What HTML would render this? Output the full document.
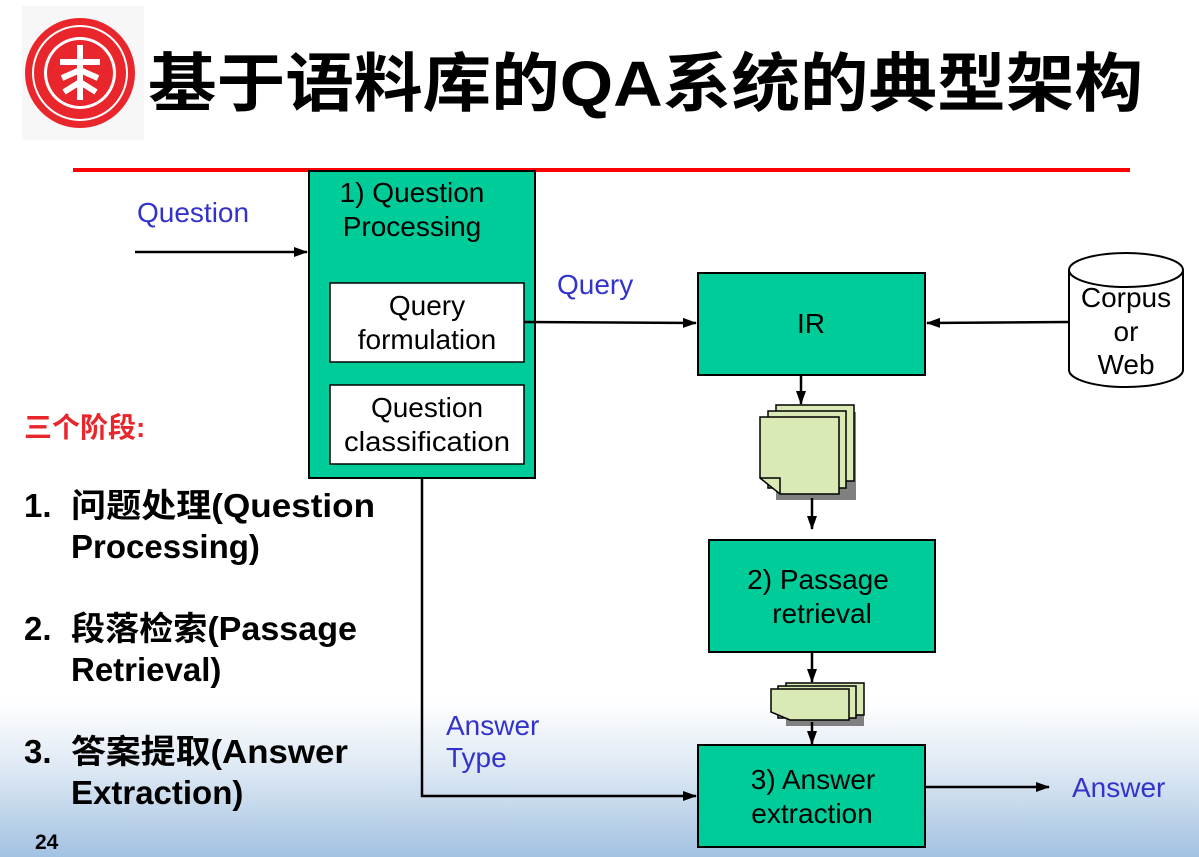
<!DOCTYPE html><html><head><meta charset="utf-8"><style>
html,body{margin:0;padding:0}
body{width:1199px;height:857px;overflow:hidden;background:linear-gradient(to bottom,#fff 0,#fff 700px,#dde8f3 770px,#a3c2e2 857px);position:relative;font-family:"Liberation Sans","Noto Sans CJK SC",sans-serif}
svg{position:absolute;left:0;top:0}
</style></head><body>
<svg width="1199" height="857" viewBox="0 0 1199 857" font-family="Liberation Sans, Noto Sans CJK SC, sans-serif">
<defs><marker id="a" markerWidth="14" markerHeight="12" refX="13" refY="6" orient="auto" markerUnits="userSpaceOnUse"><path d="M0,1 L14,6 L0,11z" fill="#000"/></marker></defs>
<!-- logo -->
<rect x="22" y="6" width="122" height="134" fill="#f7f7f7"/>
<circle cx="80" cy="73" r="55" fill="#e8262c"/>
<circle cx="80" cy="73" r="47" fill="none" stroke="#fff" stroke-width="2"/>
<circle cx="80" cy="73" r="36" fill="#fff"/>
<circle cx="80" cy="73" r="33" fill="#e8262c"/>
<path d="M80,45 L80,100 M60,62 L100,62 M62,78 L80,70 L98,78 M64,92 L80,82 L96,92" stroke="#fff" stroke-width="6" fill="none"/>
<text x="148" y="106" font-size="64" font-weight="bold" textLength="995" lengthAdjust="spacingAndGlyphs">基于语料库的QA系统的典型架构</text>
<rect x="73" y="168" width="1057" height="4" fill="#f00"/>
<!-- QP box -->
<rect x="309" y="171" width="226" height="307" fill="#00cc99" stroke="#000" stroke-width="2"/>
<g font-size="28" text-anchor="middle">
<text x="412" y="202">1) Question</text>
<text x="412" y="236">Processing</text>
<rect x="330" y="283" width="194" height="79" fill="#fff" stroke="#000" stroke-width="1.5"/>
<text x="427" y="315">Query</text>
<text x="427" y="349">formulation</text>
<rect x="330" y="385" width="194" height="79" fill="#fff" stroke="#000" stroke-width="1.5"/>
<text x="427" y="417">Question</text>
<text x="427" y="451" textLength="166" lengthAdjust="spacingAndGlyphs">classification</text>
<rect x="698" y="273" width="227" height="102" fill="#00cc99" stroke="#000" stroke-width="2"/>
<text x="811" y="333">IR</text>
<rect x="709" y="540" width="226" height="112" fill="#00cc99" stroke="#000" stroke-width="2"/>
<text x="818" y="589">2) Passage</text>
<text x="822" y="623">retrieval</text>
<rect x="698" y="745" width="227" height="102" fill="#00cc99" stroke="#000" stroke-width="2"/>
<text x="813" y="789">3) Answer</text>
<text x="812" y="823">extraction</text>
<path d="M1069,270 L1069,370 A57,17 0 0 0 1183,370 L1183,270" fill="#fff" stroke="#000" stroke-width="2"/>
<ellipse cx="1126" cy="270" rx="57" ry="17" fill="#fff" stroke="#000" stroke-width="2"/>
<text x="1126" y="307">Corpus</text>
<text x="1126" y="341">or</text>
<text x="1126" y="374">Web</text>
</g>
<!-- docs 1 -->
<rect x="776" y="412" width="80" height="88" fill="#808080"/>
<rect x="776" y="405" width="78" height="76" fill="#d9eab5" stroke="#000" stroke-width="1.5"/>
<rect x="768" y="411" width="78" height="77" fill="#d9eab5" stroke="#000" stroke-width="1.5"/>
<path d="M760,417 L839,417 L839,494 L780,494 L760,478z" fill="#d9eab5" stroke="#000" stroke-width="1.5"/>
<path d="M760,478 L780,478 L780,494" fill="none" stroke="#000" stroke-width="1.5"/>
<!-- docs 2 -->
<rect x="786" y="693" width="78" height="33" fill="#808080"/>
<rect x="786" y="683" width="78" height="32" fill="#d9eab5" stroke="#000" stroke-width="1.5"/>
<rect x="778" y="686" width="78" height="32" fill="#d9eab5" stroke="#000" stroke-width="1.5"/>
<path d="M771,689 L849,689 L849,720 L790,720 L771,712z" fill="#d9eab5" stroke="#000" stroke-width="1.5"/>
<g stroke="#000" stroke-width="2.5" fill="none">
<line x1="135" y1="252" x2="307" y2="252" marker-end="url(#a)"/>
<line x1="524" y1="322" x2="696" y2="323" marker-end="url(#a)"/>
<line x1="1068" y1="322" x2="927" y2="323" marker-end="url(#a)"/>
<line x1="801" y1="375" x2="801" y2="404" marker-end="url(#a)"/>
<line x1="812" y1="498" x2="812" y2="529" marker-end="url(#a)"/>
<line x1="812" y1="652" x2="812" y2="682" marker-end="url(#a)"/>
<line x1="812" y1="722" x2="812" y2="744" marker-end="url(#a)"/>
<polyline points="422,478 422,796 696,796" marker-end="url(#a)"/>
<line x1="925" y1="787" x2="1049" y2="787" marker-end="url(#a)"/>
</g>
<g fill="#3333cc" font-size="28">
<text x="137" y="222">Question</text>
<text x="557" y="294">Query</text>
<text x="446" y="735">Answer</text>
<text x="446" y="767">Type</text>
<text x="1072" y="797">Answer</text>
</g>
<text x="24" y="437" font-size="28" font-weight="bold" fill="#e8262c">三个阶段:</text>
<g font-size="33" font-weight="bold">
<text x="24" y="517">1.</text><text x="71" y="517" textLength="304" lengthAdjust="spacingAndGlyphs">问题处理(Question</text><text x="71" y="558">Processing)</text>
<text x="24" y="640">2.</text><text x="71" y="640" textLength="286" lengthAdjust="spacingAndGlyphs">段落检索(Passage</text><text x="71" y="681">Retrieval)</text>
<text x="24" y="763">3.</text><text x="71" y="763" textLength="277" lengthAdjust="spacingAndGlyphs">答案提取(Answer</text><text x="71" y="804">Extraction)</text>
</g>
<text x="35" y="849" font-size="21" font-weight="bold">24</text>
</svg>
</body></html>
